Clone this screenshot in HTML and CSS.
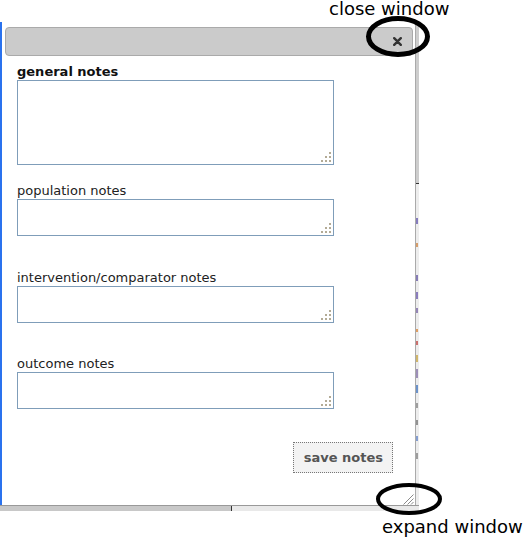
FILE: index.html
```html
<!DOCTYPE html>
<html>
<head>
<meta charset="utf-8">
<title>Notes dialog</title>
<link rel="stylesheet" href="styles.css">
</head>
<body>
<div class="page">
  <div class="note note-top">close window</div>
  <div class="frame">
    <div class="edge"></div>
    <div class="dialog">
      <div class="titlebar">
        <span class="close" title="close">
          <svg width="9" height="9" viewBox="0 0 9 9"><path d="M1.2 1.2 L7.8 7.8 M7.8 1.2 L1.2 7.8" stroke="#333" stroke-width="2.4" stroke-linecap="round" fill="none"/></svg>
        </span>
      </div>
      <div class="content">
        <label class="lbl lbl-bold">general notes</label>
        <div class="ta-wrap tall">
          <textarea class="ta"></textarea>
          <svg class="ta-grip" width="10" height="10" viewBox="0 0 10 10"><rect x="8" y="0" width="2" height="2"/><rect x="4" y="4" width="2" height="2"/><rect x="8" y="4" width="2" height="2"/><rect x="0" y="8" width="2" height="2"/><rect x="4" y="8" width="2" height="2"/><rect x="8" y="8" width="2" height="2"/></svg>
        </div>
        <label class="lbl gap-s">population notes</label>
        <div class="ta-wrap">
          <textarea class="ta"></textarea>
          <svg class="ta-grip" width="10" height="10" viewBox="0 0 10 10"><rect x="8" y="0" width="2" height="2"/><rect x="4" y="4" width="2" height="2"/><rect x="8" y="4" width="2" height="2"/><rect x="0" y="8" width="2" height="2"/><rect x="4" y="8" width="2" height="2"/><rect x="8" y="8" width="2" height="2"/></svg>
        </div>
        <label class="lbl gap-l">intervention/comparator notes</label>
        <div class="ta-wrap">
          <textarea class="ta"></textarea>
          <svg class="ta-grip" width="10" height="10" viewBox="0 0 10 10"><rect x="8" y="0" width="2" height="2"/><rect x="4" y="4" width="2" height="2"/><rect x="8" y="4" width="2" height="2"/><rect x="0" y="8" width="2" height="2"/><rect x="4" y="8" width="2" height="2"/><rect x="8" y="8" width="2" height="2"/></svg>
        </div>
        <label class="lbl gap-m">outcome notes</label>
        <div class="ta-wrap">
          <textarea class="ta"></textarea>
          <svg class="ta-grip" width="10" height="10" viewBox="0 0 10 10"><rect x="8" y="0" width="2" height="2"/><rect x="4" y="4" width="2" height="2"/><rect x="8" y="4" width="2" height="2"/><rect x="0" y="8" width="2" height="2"/><rect x="4" y="8" width="2" height="2"/><rect x="8" y="8" width="2" height="2"/></svg>
        </div>
        <div class="actions">
          <button class="save" type="button">save notes</button>
        </div>
      </div>
      <div class="grip-row">
        <svg class="grip" width="12" height="12" viewBox="0 0 12 12"><path d="M11.5 1.5 L1.5 11.5 M11.5 5.5 L5.5 11.5 M11.5 9 L9 11.5" stroke="#8a8a8a" stroke-width="1" fill="none"/></svg>
      </div>
    </div>
    <div class="vscroll">
      <div class="vthumb"></div>
      <div class="vtick"></div>
      <div class="vtrack">
        <span class="mk mk1"></span>
        <span class="mk mk2"></span>
        <span class="mk mk3"></span>
        <span class="mk mk4"></span>
        <span class="mk mk5"></span>
        <span class="mk mk6"></span>
        <span class="mk mk7"></span>
        <span class="mk mk8"></span>
        <span class="mk mk9"></span>
        <span class="mk mk10"></span>
        <span class="mk mk11"></span>
        <span class="mk mk12"></span>
        <span class="mk mk13"></span>
        <span class="mk mk14"></span>
      </div>
    </div>
  </div>
  <div class="hscroll">
    <div class="hthumb"></div>
    <div class="htick"></div>
    <div class="htrack"></div>
  </div>
  <div class="note note-bottom">expand window</div>

  <svg class="ring ring-top" width="70" height="48" viewBox="0 0 70 48"><ellipse cx="35" cy="23.5" rx="29.5" ry="18" fill="none" stroke="#000" stroke-width="5"/></svg>
  <svg class="ring ring-bottom" width="70" height="36" viewBox="0 0 70 36"><ellipse cx="35" cy="18" rx="31" ry="14" fill="none" stroke="#000" stroke-width="4"/></svg>
</div>
</body>
</html>
```

FILE: styles.css
```css
html, body {
  margin: 0;
  padding: 0;
  background: #fff;
}

body {
  font-family: "DejaVu Sans", Verdana, sans-serif;
}

.page {
  position: relative;
  width: 523px;
  height: 541px;
  overflow: hidden;
}

.note {
  font-size: 18px;
  line-height: 16px;
  color: #000;
  white-space: nowrap;
}

.note-top {
  height: 22px;
  line-height: 18px;
  padding-left: 329px;
  box-sizing: border-box;
}

.note-bottom {
  margin-top: 8px;
  padding-left: 382px;
}

.frame {
  display: flex;
  width: 419px;
  height: 483px;
}

.edge {
  width: 2px;
  background: #2a72ee;
}

.dialog {
  width: 414px;
  box-sizing: border-box;
  padding: 5px 2px 0 3px;
  border-right: 1px solid #aaa;
  background: #fff;
  display: flex;
  flex-direction: column;
}

.titlebar {
  height: 29px;
  box-sizing: border-box;
  border: 1px solid #aaa;
  border-radius: 4px;
  background: #cbcbcb;
  display: flex;
  align-items: center;
  justify-content: flex-end;
  padding-right: 10px;
}

.close {
  display: flex;
  width: 9px;
  height: 9px;
}

.content {
  padding: 8px 20px 0 12px;
  display: flex;
  flex-direction: column;
  align-items: flex-start;
}

.lbl {
  display: block;
  font-size: 13px;
  line-height: 15px;
  color: #222;
  margin-bottom: 1px;
}

.lbl-bold {
  font-weight: bold;
  color: #111;
}

.gap-s { margin-top: 18px; }
.gap-l { margin-top: 34px; }
.gap-m { margin-top: 33px; }

.ta-wrap {
  position: relative;
  width: 317px;
  height: 37px;
}

.ta-wrap.tall {
  height: 85px;
}

.ta {
  display: block;
  width: 100%;
  height: 100%;
  box-sizing: border-box;
  margin: 0;
  padding: 2px;
  border: 1px solid #7f9db9;
  background: #fff;
  resize: none;
  outline: none;
  font: 13px "DejaVu Sans", Verdana, sans-serif;
}

.ta-grip {
  position: absolute;
  right: 3px;
  bottom: 3px;
  fill: #b3ab96;
}

.actions {
  align-self: stretch;
  display: flex;
  justify-content: flex-end;
  margin-top: 33px;
}

.save {
  margin: 0;
  padding: 7px 9px 7px 10px;
  border: 1px dotted #777;
  border-radius: 0;
  background: #f3f3f3;
  color: #555;
  font: bold 13px/15px "DejaVu Sans", Verdana, sans-serif;
}

.grip-row {
  margin-top: auto;
  margin-right: -1px;
  display: flex;
  justify-content: flex-end;
}

.grip {
  display: block;
}

.vscroll {
  width: 3px;
  display: flex;
  flex-direction: column;
}

.vthumb {
  height: 161px;
  background: #cdcdcd;
}

.vtick {
  height: 1px;
  background: #333;
}

.vtrack {
  flex: 1;
  background: #ededed;
  display: flex;
  flex-direction: column;
}

.mk {
  display: block;
  width: 2px;
  opacity: 0.8;
}

.mk1 { margin-top: 34px; height: 6px; background: #6a5fb0; }
.mk2 { margin-top: 19px; height: 4px; background: #d08a4a; }
.mk3 { margin-top: 28px; height: 6px; background: #6b5fa8; }
.mk4 { margin-top: 11px; height: 7px; background: #7060b0; }
.mk5 { margin-top: 9px; height: 5px; background: #7d6aa8; }
.mk6 { margin-top: 16px; height: 3px; background: #d98a40; }
.mk7 { margin-top: 9px; height: 4px; background: #c0504d; }
.mk8 { margin-top: 10px; height: 7px; background: #c8a84a; }
.mk9 { margin-top: 7px; height: 9px; background: #8877aa; }
.mk10 { margin-top: 7px; height: 8px; background: #4a7ac0; }
.mk11 { margin-top: 10px; height: 5px; background: #8a8a8a; }
.mk12 { margin-top: 12px; height: 5px; background: #7a7a7a; }
.mk13 { margin-top: 11px; height: 5px; background: #6a8ac8; }
.mk14 { margin-top: 12px; height: 6px; background: #888; }

.hscroll {
  display: flex;
  width: 419px;
  height: 6px;
  box-sizing: border-box;
  border-top: 1px solid #999;
}

.hthumb {
  width: 231px;
  background: #c8c8c8;
}

.htick {
  width: 1px;
  background: #333;
}

.htrack {
  flex: 1;
  background: #e9e9e9;
}

.ring {
  position: absolute;
  display: block;
}

.ring-top {
  left: 363px;
  top: 13px;
}

.ring-bottom {
  left: 374px;
  top: 481px;
}
```
